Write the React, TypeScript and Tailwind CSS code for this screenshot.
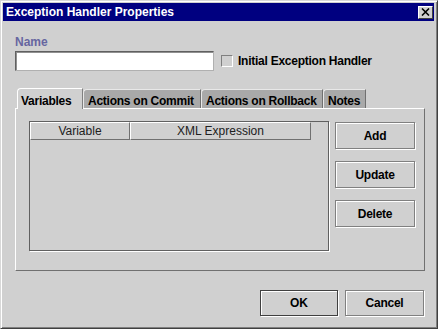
const font = "font-['Liberation_Sans',Arial,sans-serif]";

function EtchedButton({ label, className = "" }: { label: string; className?: string }) {
  return (
    <button
      className={`flex items-center justify-center border border-[#808080] bg-[#d0d0d0] text-[12px] font-bold tracking-[-0.25px] text-black shadow-[inset_1px_1px_0_#ffffff,1px_1px_0_#ffffff] ${className}`}
    >
      {label}
    </button>
  );
}

function Tab({ label, width, selected }: { label: string; width: string; selected?: boolean }) {
  if (selected) {
    return (
      <div
        className={`relative z-10 -mb-px flex h-[21px] items-start rounded-tl-[4px] border-l border-t border-r border-l-white border-t-white border-r-[#808080] bg-[#d0d0d0] pl-[3px] pt-[3px] text-[12px] font-bold tracking-[-0.25px] text-black ${width}`}
      >
        {label}
      </div>
    );
  }
  return (
    <div
      className={`flex h-[19px] items-start rounded-tl-[4px] border-l border-t border-r border-l-[#e8e8e8] border-t-[#e8e8e8] border-r-[#707070] bg-[#a9a9a9] pl-[4px] pt-[2px] text-[12px] font-bold tracking-[-0.25px] text-black ${width}`}
    >
      {label}
    </div>
  );
}

export default function App() {
  return (
    <div
      className={`flex h-[329px] w-[438px] flex-col border border-t-[#d8d8d8] border-l-[#d8d8d8] border-r-[#404040] border-b-[#404040] bg-[#d0d0d0] shadow-[inset_1px_1px_0_#ffffff,inset_-1px_-1px_0_#808080] ${font}`}
    >
      {/* title bar */}
      <div className="ml-[2px] mr-[3px] mt-[2px] flex h-[18px] items-center justify-between bg-[#000080] pl-[3px] pr-[1px]">
        <span className="text-[12px] font-bold leading-none text-white">Exception Handler Properties</span>
        <div className="flex h-[13px] w-[15px] items-center justify-center border border-t-white border-l-white border-r-[#404040] border-b-[#404040] bg-[#d0d0d0]">
          <svg width="9" height="8" viewBox="0 0 9 8">
            <path d="M1 0.5 L8 7.5 M8 0.5 L1 7.5" stroke="#000" strokeWidth="1.6" />
          </svg>
        </div>
      </div>

      <div className="flex flex-1 flex-col pl-[14px] pr-[13px]">
        <div className="mt-[14px] text-[12px] font-bold leading-[14px] text-[#6666a0]">Name</div>
        <div className="mt-[2px] flex items-center">
          <div className="h-[20px] w-[199px] border border-t-[#606060] border-l-[#606060] border-r-[#b0b0b0] border-b-[#b0b0b0] bg-white shadow-[inset_1px_1px_0_#909090]" />
          <div className="ml-[7px] h-[12px] w-[12px] border border-t-[#808080] border-l-[#808080] border-r-white border-b-white bg-[#d0d0d0]" />
          <span className="ml-[5px] text-[12px] font-bold tracking-[-0.25px] text-black">Initial Exception Handler</span>
        </div>

        {/* tabs */}
        <div className="mt-[17px] flex items-end pl-[2px]">
          <Tab label="Variables" width="w-[66px]" selected />
          <Tab label="Actions on Commit" width="w-[118px]" />
          <Tab label="Actions on Rollback" width="w-[122px]" />
          <Tab label="Notes" width="w-[43px]" />
        </div>
        <div className="flex h-[163px] w-[410px] gap-[6px] border border-t-white border-l-white border-r-[#707070] border-b-[#707070] pl-[13px] pr-[8px] pt-[12px]">
          <div className="flex h-[130px] w-[300px] flex-col border border-[#606060] shadow-[1px_1px_0_#ffffff]">
            <div className="flex h-[18px] w-[281px] text-[12px] text-[#202020]">
              <div className="flex w-[100px] items-center justify-center border border-t-white border-l-white border-r-[#707070] border-b-[#707070]">
                Variable
              </div>
              <div className="flex w-[181px] items-center justify-center border border-t-white border-l-white border-r-[#707070] border-b-[#707070]">
                XML Expression
              </div>
            </div>
          </div>
          <div className="flex flex-col gap-[12px] pt-[1px]">
            <EtchedButton label="Add" className="h-[27px] w-[80px]" />
            <EtchedButton label="Update" className="h-[27px] w-[80px]" />
            <EtchedButton label="Delete" className="h-[27px] w-[80px]" />
          </div>
        </div>

        <div className="mt-[19px] flex justify-end gap-[7px]">
          <button className="flex h-[26px] w-[78px] items-center justify-center border border-[#404040] bg-[#d0d0d0] text-[12px] font-bold text-black shadow-[inset_1px_1px_0_#ffffff,1px_1px_0_#ffffff]">
            OK
          </button>
          <EtchedButton label="Cancel" className="h-[26px] w-[79px]" />
        </div>
      </div>
    </div>
  );
}
